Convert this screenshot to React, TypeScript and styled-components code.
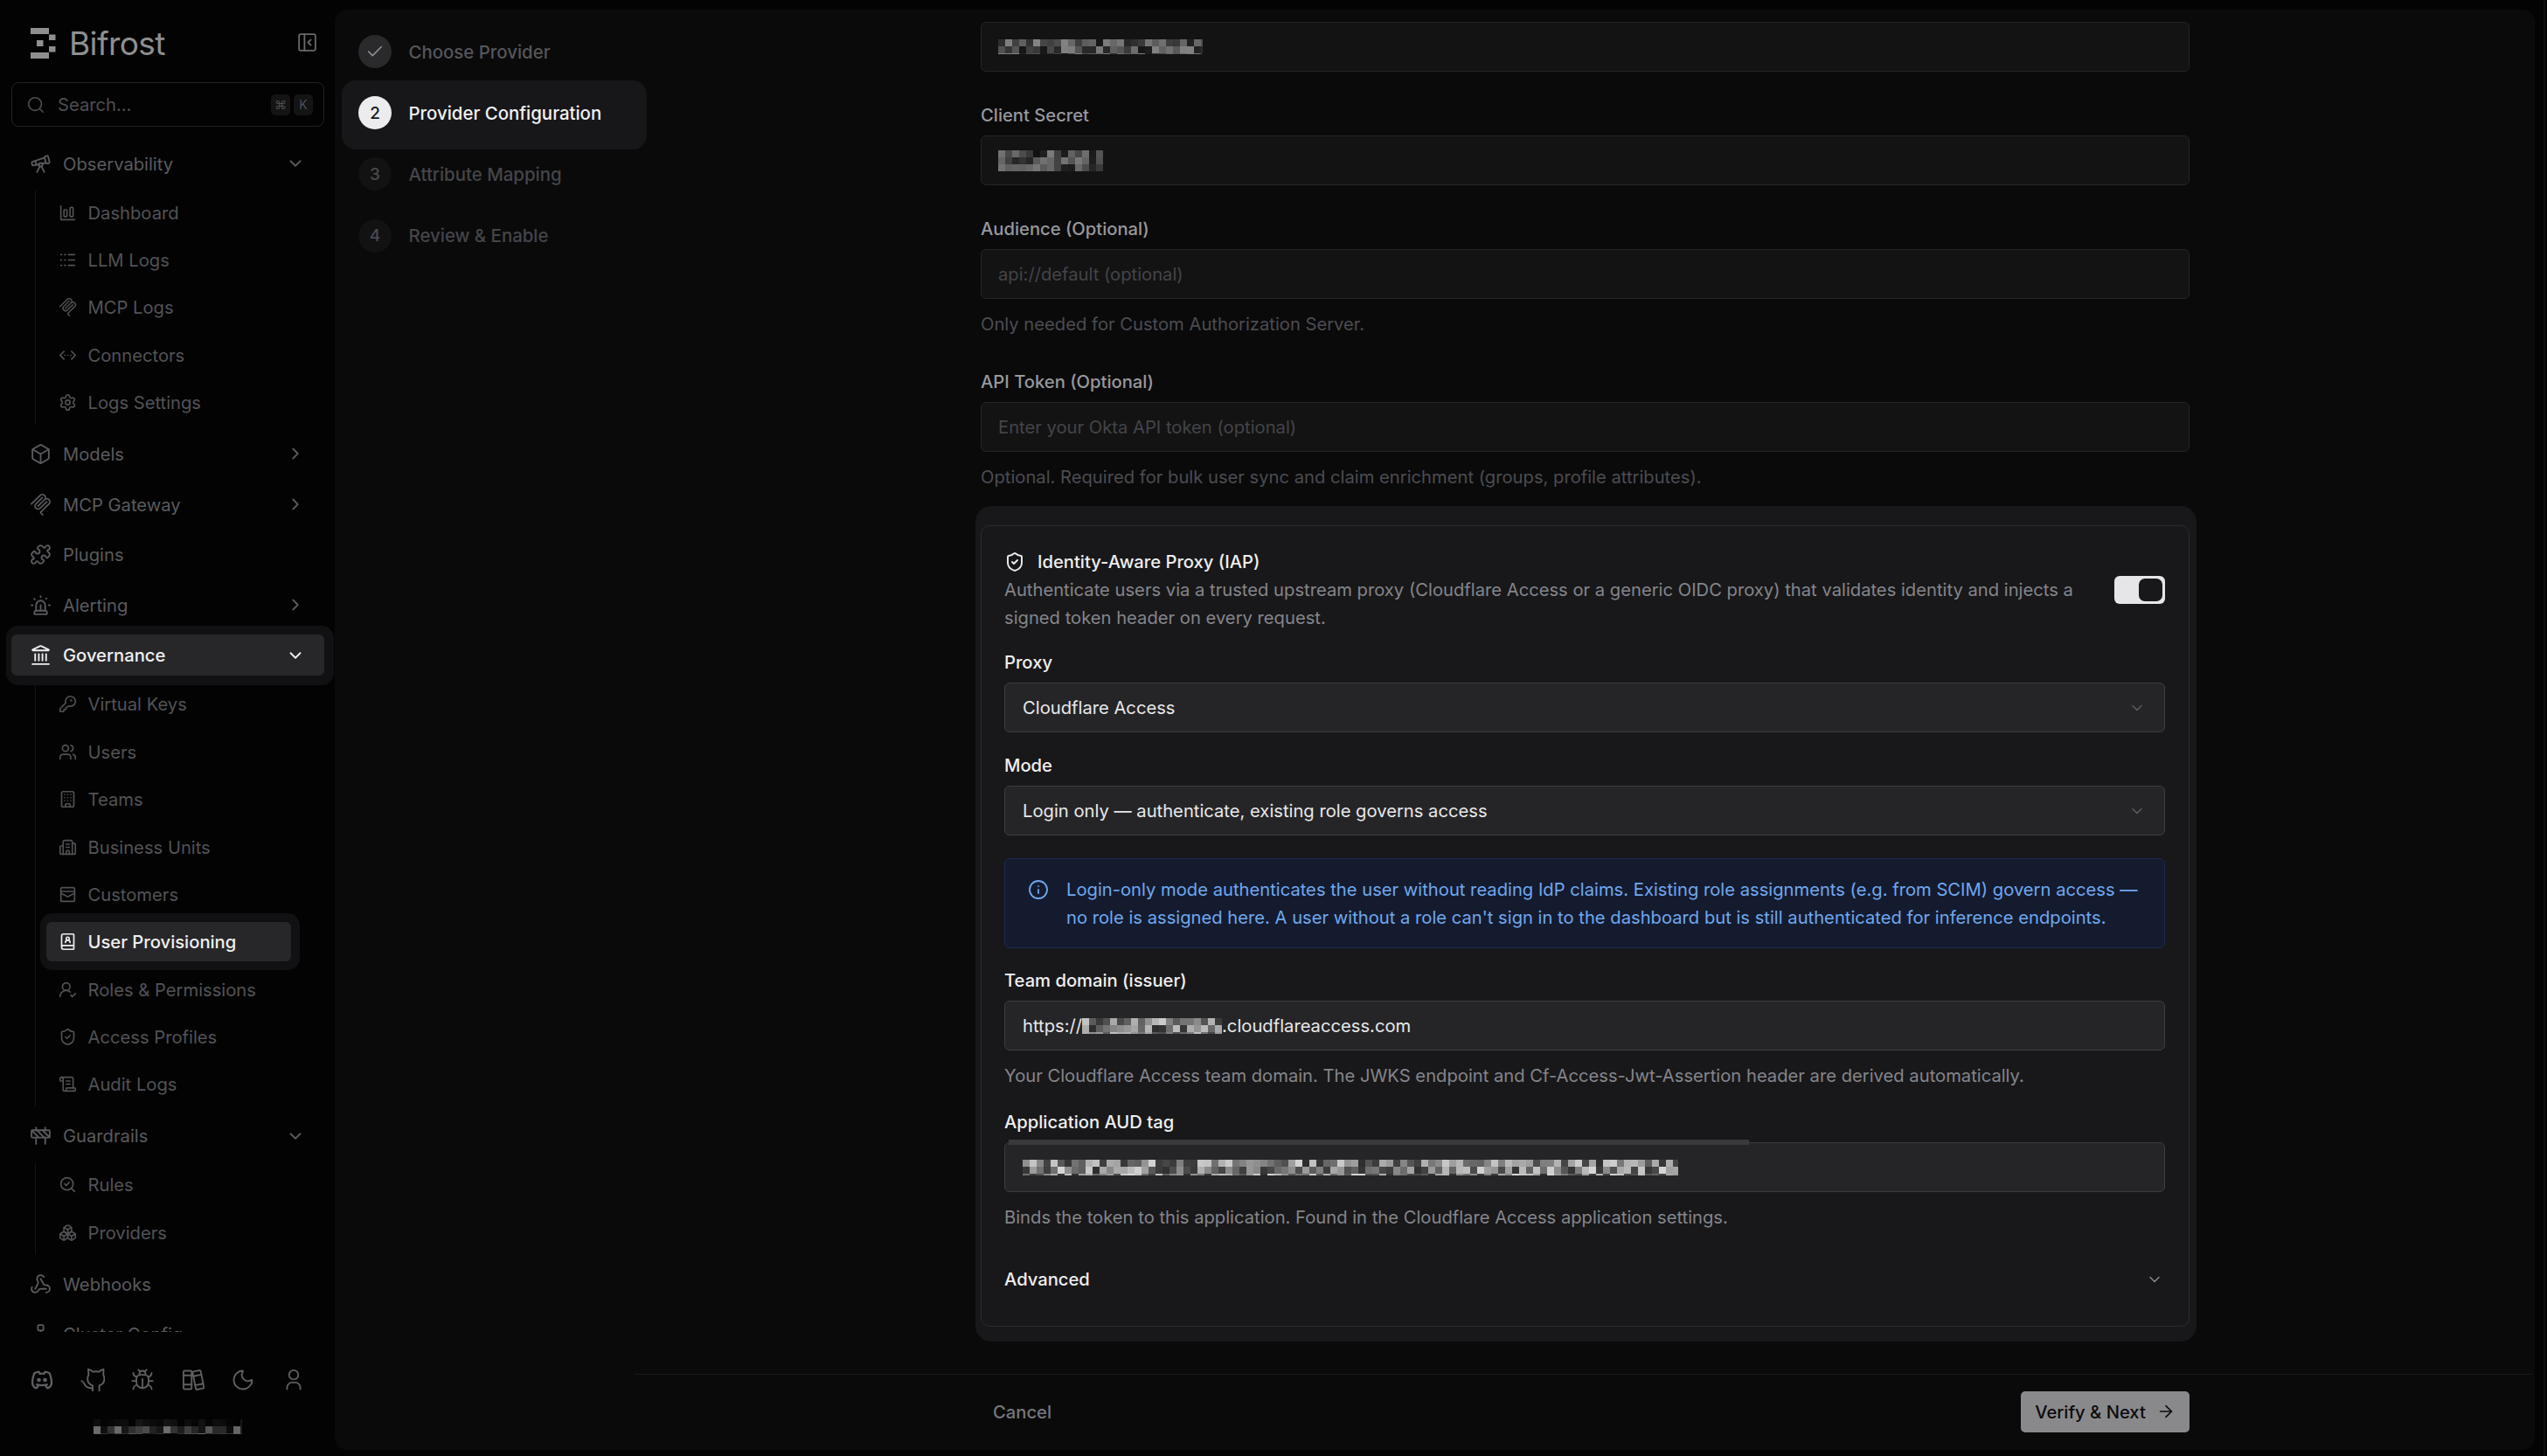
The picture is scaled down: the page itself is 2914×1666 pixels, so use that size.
import React from "react";
import styled, { createGlobalStyle } from "styled-components";
import {
  Telescope, ChartColumnBig, Logs, ChevronsLeftRightEllipsis, Settings, Box, Puzzle, Siren, Landmark,
  KeyRound, Users, Building, Building2, BookUser, UserRoundCheck, ShieldCheck, ScrollText, Construction,
  SearchCheck, Boxes, Webhook, Network, Bug, Moon, ChevronDown, ChevronRight,
  PanelLeftClose, Search, Check, Info, ArrowRight,
} from "lucide-react";
import { TbBrandDiscord } from "react-icons/tb";

const GlobalStyle = createGlobalStyle`
  html, body { margin: 0; padding: 0; background: #030303; }
  body { font-family: "Inter", "Liberation Sans", sans-serif; font-size: 20.2px; }
  * { box-sizing: border-box; }
`;

type IconProps = { size?: number; strokeWidth?: number };

const McpIcon = ({ size = 24 }: IconProps) => (
  <svg width={size} height={size} viewBox="0 0 24 24" fill="currentColor">
    <path d="M15.688 2.343a2.588 2.588 0 00-3.61 0l-9.626 9.44a.863.863 0 01-1.203 0 .823.823 0 010-1.18l9.626-9.44a4.313 4.313 0 016.016 0 4.116 4.116 0 011.204 3.54 4.3 4.3 0 013.609 1.18l.05.05a4.115 4.115 0 010 5.9l-8.706 8.537a.274.274 0 000 .393l1.788 1.754a.823.823 0 010 1.18.863.863 0 01-1.203 0l-1.788-1.753a1.92 1.92 0 010-2.754l8.706-8.538a2.47 2.47 0 000-3.54l-.05-.049a2.588 2.588 0 00-3.607-.003l-7.172 7.034-.002.002-.098.097a.863.863 0 01-1.204 0 .823.823 0 010-1.18l7.273-7.133a2.47 2.47 0 00-.003-3.537z" />
    <path d="M14.485 4.703a.823.823 0 000-1.18.863.863 0 00-1.204 0l-7.119 6.982a4.115 4.115 0 000 5.9 4.314 4.314 0 006.016 0l7.12-6.982a.823.823 0 000-1.18.863.863 0 00-1.204 0l-7.119 6.982a2.588 2.588 0 01-3.61 0 2.47 2.47 0 010-3.54l7.12-6.982z" />
  </svg>
);

const CustomersIcon = ({ size = 24, strokeWidth = 1.8 }: IconProps) => (
  <svg width={size} height={size} viewBox="0 0 24 24" fill="none" stroke="currentColor" strokeWidth={strokeWidth} strokeLinecap="round" strokeLinejoin="round">
    <rect x="3" y="3" width="18" height="18" rx="2" />
    <path d="M3 8h18" />
    <path d="M3.5 10.5 12 15l8.5-4.5" />
  </svg>
);

const GithubCatIcon = ({ size = 24, strokeWidth = 1.8 }: IconProps) => (
  <svg width={size} height={size} viewBox="0 0 24 24" fill="none" stroke="currentColor" strokeWidth={strokeWidth} strokeLinecap="round" strokeLinejoin="round">
    <path d="M12 22.5v-5c-3-1-5-3-5-6.5 0-1.7.4-3 1-4L7.7 1.5c2 .4 3.4 1.3 4.5 2.5 1.9-.4 4.1-.4 6 0 1.1-1.2 2.5-2.1 4.5-2.5l-.2 5.5c.6 1 1 2.3 1 4 0 3.5-2 5.5-5 6.5v5" />
    <path d="M1.2 13c2 .5 2.5 3.5 4.5 5.5 2 1.5 4 1.8 6.3 1.6" />
  </svg>
);

const BooksIcon = ({ size = 24, strokeWidth = 1.8 }: IconProps) => (
  <svg width={size} height={size} viewBox="0 0 24 24" fill="none" stroke="currentColor" strokeWidth={strokeWidth} strokeLinecap="round" strokeLinejoin="round">
    <rect x="2.5" y="3" width="8" height="18" rx="1" />
    <path d="M2.5 7.5h8M2.5 16.5h8" />
    <g transform="rotate(-11 17 12)">
      <rect x="13" y="3" width="8" height="18" rx="1" />
      <path d="M13 7.5h8M13 16.5h8" />
    </g>
  </svg>
);

const PersonIcon = ({ size = 24, strokeWidth = 1.8 }: IconProps) => (
  <svg width={size} height={size} viewBox="0 0 24 24" fill="none" stroke="currentColor" strokeWidth={strokeWidth} strokeLinecap="round" strokeLinejoin="round">
    <circle cx="12" cy="7" r="4.5" />
    <path d="M5.5 21v-1.5a5 5 0 0 1 5-5h3a5 5 0 0 1 5 5V21" />
  </svg>
);

const LogoMark = () => (
  <svg width="29" height="35" viewBox="0 0 29 35" fill="#8f8f8f">
    <rect x="0" y="0" width="21" height="7" />
    <rect x="21" y="7.5" width="7.5" height="6.5" />
    <rect x="7" y="14" width="7.5" height="7" />
    <rect x="21" y="21" width="7.5" height="6.5" />
    <rect x="0" y="28" width="21" height="7" />
  </svg>
);

/* Redacted text in the reference: a pixel mosaic */
const MosaicSvg = styled.svg`
  display: block;
  flex: none;
`;

const Mosaic = ({ w, h, cell = 8, seed = 1, max = 170, base = 30, fadeTop = false }: { w: number; h: number; cell?: number; seed?: number; max?: number; base?: number; fadeTop?: boolean }) => {
  let s = seed * 9301 + 49297;
  const next = () => {
    s = (s * 9301 + 49297) % 233280;
    return s / 233280;
  };
  const cells: React.ReactNode[] = [];
  for (let y = 0; y < h; y += cell) {
    for (let x = 0; x < w; x += cell) {
      const r = next();
      const sparse = fadeTop && y === 0 ? 0.22 : 1;
      const v = Math.round((base + (max - base) * r) * sparse);
      cells.push(<rect key={`${x}-${y}`} x={x} y={y} width={cell} height={cell} fill={`rgb(${v},${v},${v})`} />);
    }
  }
  return (
    <MosaicSvg width={w} height={h} viewBox={`0 0 ${w} ${h}`} shapeRendering="crispEdges">
      {cells}
    </MosaicSvg>
  );
};

const Shell = styled.div`
  position: relative;
  display: flex;
  width: 2914px;
  height: 1666px;
  overflow: hidden;
  background: #030303;
`;

const FrameEdge = styled.span`
  position: absolute;
  top: 0;
  bottom: 0;
  right: 2px;
  width: 2px;
  background: #101011;
`;

const Sidebar = styled.aside`
  width: 383px;
  flex: none;
  display: flex;
  flex-direction: column;
  height: 100%;
`;

const Brand = styled.div`
  height: 94px;
  display: flex;
  align-items: flex-start;
  justify-content: space-between;
  padding: 32px 19px 0 35px;
  color: #6a6a6e;
`;

const BrandLogo = styled.div`
  display: flex;
  align-items: center;
  gap: 15px;
  height: 35px;
`;

const BrandName = styled.span`
  font-size: 37px;
  font-weight: 400;
  letter-spacing: -0.6px;
  color: #8f8f8f;
  line-height: 35px;
`;

const CollapseSlot = styled.span`
  display: flex;
  margin-top: 4px;
`;

const SearchBox = styled.div`
  height: 51px;
  margin: 0 12px 0 13px;
  display: flex;
  align-items: center;
  gap: 14px;
  padding: 0 12px 0 16px;
  border: 1px solid #222224;
  border-radius: 8px;
  color: #4e4e52;
`;

const SearchText = styled.span`
  flex: 1;
`;

const Kbd = styled.span`
  width: 22px;
  height: 24px;
  display: flex;
  align-items: center;
  justify-content: center;
  border-radius: 5px;
  background: #141415;
  font-size: 14px;
  color: #4e4e52;
`;

const KbdRow = styled.div`
  display: flex;
  gap: 4px;
`;

const Nav = styled.nav`
  flex: 1;
  min-height: 0;
  overflow: hidden;
  display: flex;
  flex-direction: column;
  gap: 10.6px;
  padding: 18.5px 12px 0 13px;
`;

const NavItem = styled.div<{ $active?: boolean }>`
  position: relative;
  flex: none;
  height: 47px;
  display: flex;
  align-items: center;
  gap: 13px;
  padding: 0 21px 0 20px;
  border-radius: 6px;
  color: ${(p) => (p.$active ? "#f0f0f0" : "#5a5a5e")};
  background: ${(p) => (p.$active ? "#27272a" : "transparent")};
  border: 1px solid ${(p) => (p.$active ? "#4c4c4f" : "transparent")};
  font-weight: ${(p) => (p.$active ? 500 : 400)};
  z-index: 0;
  &::before {
    content: ${(p) => (p.$active ? '""' : "none")};
    position: absolute;
    inset: -11px -12px -12px -7px;
    background: #111113;
    border-radius: 14px;
    z-index: -2;
  }
  &::after {
    content: ${(p) => (p.$active ? '""' : "none")};
    position: absolute;
    inset: -1px;
    background: #27272a;
    border-radius: 6px;
    z-index: -1;
  }
`;

const NavLabel = styled.span`
  flex: 1;
  white-space: nowrap;
`;

const NavGroup = styled.div`
  flex: none;
  display: flex;
  flex-direction: column;
`;

const SubList = styled.div`
  margin: 7.5px 0 0 27px;
  padding: 2.5px 0 2.3px 12px;
  border-left: 1px solid #151516;
  display: flex;
  flex-direction: column;
  gap: 9.4px;
  width: 305px;
`;

const SubItem = styled.div<{ $active?: boolean }>`
  position: relative;
  height: 45px;
  display: flex;
  align-items: center;
  gap: 12.5px;
  padding-left: 14px;
  border-radius: 6px;
  width: 280px;
  color: ${(p) => (p.$active ? "#f0f0f0" : "#525256")};
  font-weight: ${(p) => (p.$active ? 500 : 400)};
  z-index: 0;
  background: ${(p) => (p.$active ? "#27272a" : "transparent")};
  &::before {
    content: ${(p) => (p.$active ? '""' : "none")};
    position: absolute;
    inset: -10px -10px -10px -7px;
    background: #111113;
    border-radius: 14px;
    z-index: -2;
  }
  &::after {
    content: ${(p) => (p.$active ? '""' : "none")};
    position: absolute;
    inset: 0;
    background: #27272a;
    border-radius: 6px;
    z-index: -1;
  }
`;

const SideFooter = styled.div`
  flex: none;
  height: 142px;
  display: flex;
  flex-direction: column;
  align-items: center;
`;

const IconRow = styled.div`
  display: flex;
  align-self: flex-start;
  align-items: center;
  gap: 29.6px;
  padding: 41px 0 0 34px;
  color: #5f5f63;
`;

const VersionBlur = styled.div`
  margin-top: 31px;
  width: 170px;
  height: 17px;
`;

const Panel = styled.main`
  flex: 1;
  min-width: 0;
  margin: 11px 14px 7px 0;
  display: flex;
  background: #0a0a0b;
  border-radius: 14px;
  overflow: hidden;
`;

const StepColumn = styled.div`
  width: 343px;
  flex: none;
  padding: 13px 0 0 27px;
  display: flex;
  flex-direction: column;
  position: relative;
  z-index: 1;
`;

const Step = styled.div<{ $state: "done" | "active" | "todo" }>`
  position: relative;
  height: 70.2px;
  display: flex;
  align-items: center;
  gap: 19.5px;
  z-index: 0;
  font-size: 20.4px;
  font-weight: 500;
  color: ${(p) => (p.$state === "active" ? "#f2f2f2" : p.$state === "done" ? "#56565a" : "#454549")};
  &::before {
    content: ${(p) => (p.$state === "active" ? '""' : "none")};
    position: absolute;
    left: -19px;
    width: 349px;
    top: -2px;
    bottom: -7px;
    background: #17171a;
    border-radius: 16px;
    z-index: -1;
  }
`;

const StepDot = styled.span<{ $state: "done" | "active" | "todo" }>`
  width: 38px;
  height: 38px;
  flex: none;
  border-radius: 50%;
  display: flex;
  align-items: center;
  justify-content: center;
  font-size: 19px;
  font-weight: 500;
  background: ${(p) => (p.$state === "active" ? "#ececee" : p.$state === "done" ? "#2a2a2c" : "#121213")};
  color: ${(p) => (p.$state === "active" ? "#17171a" : p.$state === "done" ? "#8f8f92" : "#4a4a4e")};
`;

const ContentCol = styled.div`
  flex: 1;
  min-width: 0;
  display: flex;
  flex-direction: column;
`;

const ScrollArea = styled.div`
  flex: 1;
  min-height: 0;
  overflow: hidden;
  padding: 14px 0 0 396px;
`;

const Form = styled.div`
  width: 1383px;
`;

const Label = styled.div<{ $top?: number; $tone?: "dim" | "bright" }>`
  margin-top: ${(p) => p.$top ?? 0}px;
  margin-bottom: 8px;
  line-height: 30px;
  font-weight: 500;
  color: ${(p) => (p.$tone === "bright" ? "#efeff0" : "#98989c")};
`;

const Field = styled.div<{ $raised?: boolean }>`
  position: relative;
  height: 57px;
  display: flex;
  align-items: center;
  padding: ${(p) => (p.$raised ? "0 20px" : "0 19px")};
  border-radius: 6px;
  background: ${(p) => (p.$raised ? "#252527" : "#131314")};
  border: 1px solid ${(p) => (p.$raised ? "#3d3d40" : "#252527")};
  color: ${(p) => (p.$raised ? "#e8e8ea" : "#444448")};
`;

const FieldValue = styled.span`
  flex: 1;
  display: flex;
  align-items: center;
  white-space: nowrap;
`;

const Hint = styled.div<{ $top?: number; $tone?: "dim" | "mid" }>`
  margin-top: ${(p) => p.$top ?? 14}px;
  line-height: 30px;
  color: ${(p) => (p.$tone === "mid" ? "#85858b" : "#4c4c51")};
  white-space: nowrap;
`;

const Highlight = styled.section`
  margin: 18px -8px 0 -6px;
  padding: 22px 8px 17px 6px;
  background: #18181a;
  border-radius: 18px;
`;

const Card = styled.div`
  border: 1px solid #2c2c2f;
  border-radius: 10px;
  padding: 25.5px 27px 37.5px 26px;
`;

const CardHead = styled.div`
  display: flex;
  align-items: center;
  justify-content: space-between;
  gap: 20px;
`;

const CardTitle = styled.div`
  display: flex;
  align-items: center;
  gap: 14px;
  line-height: 30px;
  font-weight: 500;
  color: #eeeeef;
`;

const CardDesc = styled.div`
  margin-top: 1px;
  line-height: 32px;
  color: #85858b;
  white-space: nowrap;
`;

const Toggle = styled.span`
  flex: none;
  width: 58px;
  height: 32px;
  padding: 3px;
  border-radius: 6px;
  background: #e6e6e8;
  display: flex;
  justify-content: flex-end;
`;

const ToggleKnob = styled.span`
  width: 27px;
  height: 26px;
  border-radius: 7px;
  background: #18181a;
`;

const SelectChevron = styled.span`
  display: flex;
  color: #5c5c60;
  margin-right: 1px;
`;

const Alert = styled.div`
  margin-top: 26px;
  height: 103px;
  padding: 19px 26px;
  display: flex;
  gap: 20px;
  border: 1px solid #1b2a4f;
  border-radius: 6px;
  background: #151b2e;
  color: #6fa8ee;
  line-height: 32px;
  white-space: nowrap;
`;

const AlertIcon = styled.span`
  flex: none;
  display: flex;
  align-items: center;
  height: 32px;
`;

const GlitchBar = styled.span`
  position: absolute;
  left: 4px;
  top: -4px;
  width: 847px;
  height: 6px;
  background: #3a3a3c;
`;

const Advanced = styled.div`
  margin-top: 41px;
  display: flex;
  align-items: center;
  justify-content: space-between;
  line-height: 30px;
  font-weight: 500;
  color: #eeeeef;
  padding-right: 2px;
`;

const AdvancedChevron = styled.span`
  display: flex;
  color: #86868a;
`;

const Footer = styled.footer`
  flex: none;
  height: 87px;
  margin-right: 3px;
  border-top: 1px solid #19191b;
  padding: 0 392px 2px 410px;
  display: flex;
  align-items: center;
  justify-content: space-between;
`;

const CancelButton = styled.span`
  color: #77777b;
  font-weight: 500;
`;

const NextButton = styled.span`
  width: 193px;
  height: 47px;
  display: flex;
  align-items: center;
  justify-content: center;
  gap: 12px;
  border-radius: 5px;
  background: #89898c;
  color: #0b0b0c;
  font-weight: 500;
`;

type SubDef = { label: string; Icon: React.ComponentType<any>; active?: boolean };
type NavDef = { label: string; Icon: React.ComponentType<any>; open?: boolean; chevron?: boolean; active?: boolean; items?: SubDef[] };

const nav: NavDef[] = [
  {
    label: "Observability", Icon: Telescope, open: true, chevron: true,
    items: [
      { label: "Dashboard", Icon: ChartColumnBig },
      { label: "LLM Logs", Icon: Logs },
      { label: "MCP Logs", Icon: McpIcon },
      { label: "Connectors", Icon: ChevronsLeftRightEllipsis },
      { label: "Logs Settings", Icon: Settings },
    ],
  },
  { label: "Models", Icon: Box, chevron: true },
  { label: "MCP Gateway", Icon: McpIcon, chevron: true },
  { label: "Plugins", Icon: Puzzle },
  { label: "Alerting", Icon: Siren, chevron: true },
  {
    label: "Governance", Icon: Landmark, open: true, chevron: true, active: true,
    items: [
      { label: "Virtual Keys", Icon: KeyRound },
      { label: "Users", Icon: Users },
      { label: "Teams", Icon: Building },
      { label: "Business Units", Icon: Building2 },
      { label: "Customers", Icon: CustomersIcon },
      { label: "User Provisioning", Icon: BookUser, active: true },
      { label: "Roles & Permissions", Icon: UserRoundCheck },
      { label: "Access Profiles", Icon: ShieldCheck },
      { label: "Audit Logs", Icon: ScrollText },
    ],
  },
  {
    label: "Guardrails", Icon: Construction, open: true, chevron: true,
    items: [
      { label: "Rules", Icon: SearchCheck },
      { label: "Providers", Icon: Boxes },
    ],
  },
  { label: "Webhooks", Icon: Webhook },
  { label: "Cluster Config", Icon: Network },
];

const steps: { n: string; label: string; state: "done" | "active" | "todo" }[] = [
  { n: "1", label: "Choose Provider", state: "done" },
  { n: "2", label: "Provider Configuration", state: "active" },
  { n: "3", label: "Attribute Mapping", state: "todo" },
  { n: "4", label: "Review & Enable", state: "todo" },
];

export default function App() {
  return (
    <>
      <GlobalStyle />
      <Shell>
        <Sidebar>
          <Brand>
            <BrandLogo>
              <LogoMark />
              <BrandName>Bifrost</BrandName>
            </BrandLogo>
            <CollapseSlot><PanelLeftClose size={25} strokeWidth={1.7} /></CollapseSlot>
          </Brand>
          <SearchBox>
            <Search size={22} strokeWidth={1.8} />
            <SearchText>Search...</SearchText>
            <KbdRow>
              <Kbd>⌘</Kbd>
              <Kbd>K</Kbd>
            </KbdRow>
          </SearchBox>
          <Nav>
            {nav.map((n) => (
              <NavGroup key={n.label}>
                <NavItem $active={n.active}>
                  <n.Icon size={25} strokeWidth={1.8} />
                  <NavLabel>{n.label}</NavLabel>
                  {n.chevron && (n.open ? <ChevronDown size={22} strokeWidth={2} /> : <ChevronRight size={22} strokeWidth={2} />)}
                </NavItem>
                {n.items && (
                  <SubList>
                    {n.items.map((s) => (
                      <SubItem key={s.label} $active={s.active}>
                        <s.Icon size={21} strokeWidth={1.9} />
                        <span>{s.label}</span>
                      </SubItem>
                    ))}
                  </SubList>
                )}
              </NavGroup>
            ))}
          </Nav>
          <SideFooter>
            <IconRow>
              <TbBrandDiscord size={28} />
              <GithubCatIcon size={28} strokeWidth={1.6} />
              <Bug size={28} strokeWidth={1.6} />
              <BooksIcon size={28} strokeWidth={1.6} />
              <Moon size={28} strokeWidth={1.6} />
              <PersonIcon size={28} strokeWidth={1.6} />
            </IconRow>
            <VersionBlur>
              <Mosaic w={170} h={17} cell={8} seed={7} max={110} base={4} fadeTop />
            </VersionBlur>
          </SideFooter>
        </Sidebar>

        <Panel>
          <StepColumn>
            {steps.map((s) => (
              <Step key={s.n} $state={s.state}>
                <StepDot $state={s.state}>{s.state === "done" ? <Check size={22} strokeWidth={1.8} /> : s.n}</StepDot>
                <span>{s.label}</span>
              </Step>
            ))}
          </StepColumn>

          <ContentCol>
            <ScrollArea>
              <Form>
                <Field>
                  <FieldValue><Mosaic w={234} h={17} seed={3} max={135} base={20} /></FieldValue>
                </Field>

                <Label $top={35}>Client Secret</Label>
                <Field>
                  <FieldValue><Mosaic w={120} h={24} seed={5} max={125} base={15} /></FieldValue>
                </Field>

                <Label $top={35}>Audience (Optional)</Label>
                <Field>
                  <FieldValue>api://default (optional)</FieldValue>
                </Field>
                <Hint>Only needed for Custom Authorization Server.</Hint>

                <Label $top={36}>API Token (Optional)</Label>
                <Field>
                  <FieldValue>Enter your Okta API token (optional)</FieldValue>
                </Field>
                <Hint>Optional. Required for bulk user sync and claim enrichment (groups, profile attributes).</Hint>

                <Highlight>
                  <Card>
                    <CardHead>
                      <div>
                        <CardTitle>
                          <ShieldCheck size={24} strokeWidth={1.9} />
                          Identity-Aware Proxy (IAP)
                        </CardTitle>
                        <CardDesc>
                          Authenticate users via a trusted upstream proxy (Cloudflare Access or a generic OIDC proxy) that validates identity and injects a
                          <br />
                          signed token header on every request.
                        </CardDesc>
                      </div>
                      <Toggle><ToggleKnob /></Toggle>
                    </CardHead>

                    <Label $top={20.5} $tone="bright">Proxy</Label>
                    <Field $raised>
                      <FieldValue>Cloudflare Access</FieldValue>
                      <SelectChevron><ChevronDown size={20} strokeWidth={1.8} /></SelectChevron>
                    </Field>

                    <Label $top={23} $tone="bright">Mode</Label>
                    <Field $raised>
                      <FieldValue>Login only — authenticate, existing role governs access</FieldValue>
                      <SelectChevron><ChevronDown size={20} strokeWidth={1.8} /></SelectChevron>
                    </Field>

                    <Alert>
                      <AlertIcon><Info size={24} strokeWidth={1.8} /></AlertIcon>
                      <div>
                        Login-only mode authenticates the user without reading IdP claims. Existing role assignments (e.g. from SCIM) govern access —
                        <br />
                        no role is assigned here. A user without a role can't sign in to the dashboard but is still authenticated for inference endpoints.
                      </div>
                    </Alert>

                    <Label $top={22} $tone="bright">Team domain (issuer)</Label>
                    <Field $raised>
                      <FieldValue>
                        https://
                        <Mosaic w={160} h={18} seed={11} max={210} base={40} />
                        .cloudflareaccess.com
                      </FieldValue>
                    </Field>
                    <Hint $top={14} $tone="mid">Your Cloudflare Access team domain. The JWKS endpoint and Cf-Access-Jwt-Assertion header are derived automatically.</Hint>

                    <Label $top={23} $tone="bright">Application AUD tag</Label>
                    <Field $raised>
                      <GlitchBar />
                      <FieldValue><Mosaic w={750} h={18} seed={13} max={215} base={45} /></FieldValue>
                    </Field>
                    <Hint $tone="mid">Binds the token to this application. Found in the Cloudflare Access application settings.</Hint>

                    <Advanced>
                      Advanced
                      <AdvancedChevron><ChevronDown size={20} strokeWidth={1.9} /></AdvancedChevron>
                    </Advanced>
                  </Card>
                </Highlight>
              </Form>
            </ScrollArea>
            <Footer>
              <CancelButton>Cancel</CancelButton>
              <NextButton>
                Verify &amp; Next
                <ArrowRight size={22} strokeWidth={1.8} />
              </NextButton>
            </Footer>
          </ContentCol>
        </Panel>
        <FrameEdge />
      </Shell>
    </>
  );
}
